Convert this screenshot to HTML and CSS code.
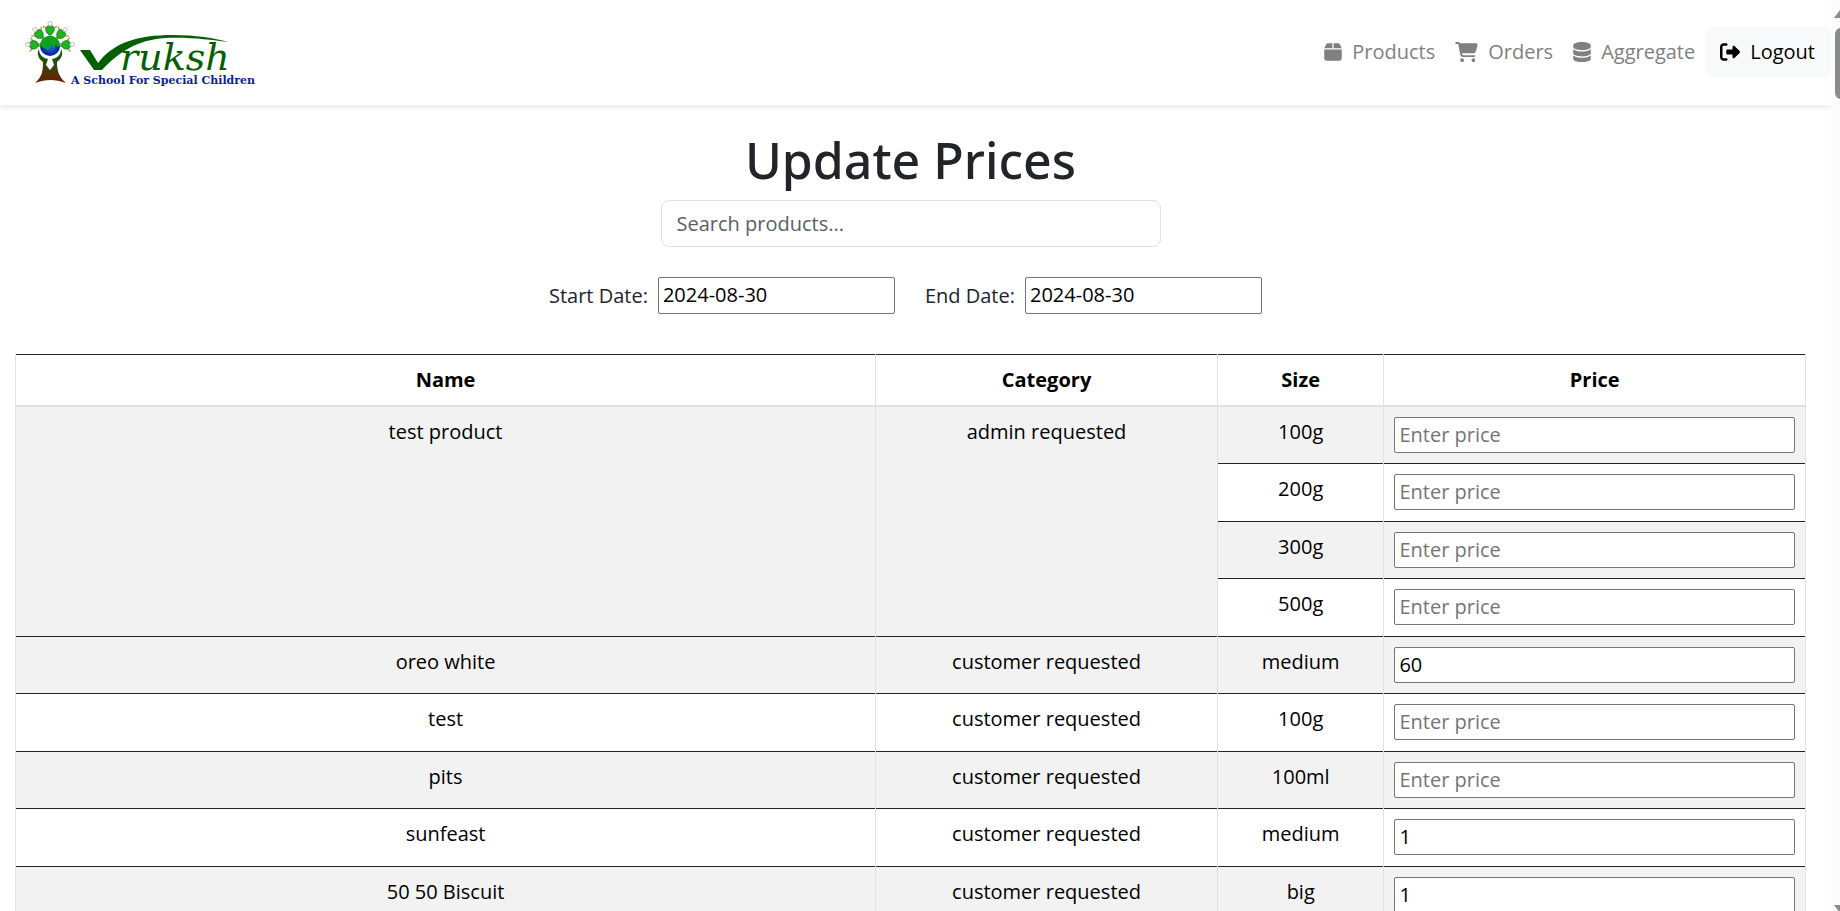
FILE: index.html
```html
<!DOCTYPE html>
<html lang="en">
<head>
<meta charset="utf-8">
<title>Update Prices</title>
<link rel="stylesheet" href="styles.css">
</head>
<body>
<header class="navbar">
  <a class="brand" href="#" aria-label="Vruksh, a school for special children">
    <svg class="logo" viewBox="0 0 236 70" width="236" height="70">
      <defs>
        <linearGradient id="trunk" x1="0" y1="0" x2="0" y2="1"><stop offset="0" stop-color="#0a6412"/><stop offset=".35" stop-color="#26500c"/><stop offset="1" stop-color="#6e1a04"/></linearGradient>
        <radialGradient id="sea"><stop offset="0" stop-color="#1e78e0"/><stop offset="1" stop-color="#0a1a9c"/></radialGradient>
        <g id="leaf">
          <circle cx="0" cy="-22.500" r="2" fill="#fff" stroke="#b9b0b0" stroke-width=".8"/>
          <path d="M-2-16-7-20M2-16 7-20M-1-12-1-8M1-12 1-8" stroke="#c98a3c" stroke-width="1.300" fill="none"/>
          <path d="M0-11C-2-12-5-14-4-18-3-21-1-20 0-19 1-20 3-21 4-18 5-14 2-12 0-11Z" fill="#19b81e" stroke="#0b7a12" stroke-width=".8"/>
        </g>
      </defs>
      <g transform="translate(30 29)">
        <use href="#leaf"/><use href="#leaf" transform="rotate(43)"/><use href="#leaf" transform="rotate(-43)"/><use href="#leaf" transform="rotate(86)"/><use href="#leaf" transform="rotate(-86)"/>
      </g>
      <path d="M19 32C19 37 22 41 28 42L26 48 30 53 34 48 32 42C38 41 41 37 41 32 44 37 41 42 37 45 37 54 39 60 46 66 35 62 26 62 15 66 22 60 23 54 23 45 19 42 16 37 19 32Z" fill="url(#trunk)"/>
      <circle cx="30" cy="29" r="10" fill="url(#sea)"/>
      <path d="M20 29C20 23 25 19 30 19 35 19 40 23 40 29L37 30 36 27 34 32 31 27 28 33 24 31Z" fill="#0aa51b"/>
      <path d="M60 33H70L78 46C93 26 117 18 153 18 176 18 194 21 208 25 190 23 171 20 145 21 117 23 99 35 82 53H74Z" fill="#045f04"/>
      <text class="logo-name" x="100" y="53">ruksh</text>
      <text class="logo-tag" x="51" y="67">A School For Special Children</text>
    </svg>
  </a>
  <nav class="menu">
    <a class="menu-link" href="#"><svg viewBox="0 0 448 512" width="18" height="20"><path d="M50.700 58.500L0 160H208V32H93.700C75.500 32 58.900 42.300 50.700 58.500zM240 160H448L397.300 58.500C389.100 42.300 372.500 32 354.300 32H240V160zM448 192H0V416c0 35.300 28.700 64 64 64H384c35.300 0 64-28.700 64-64V192z"/></svg>Products</a>
    <a class="menu-link" href="#"><svg viewBox="0 0 576 512" width="23" height="20"><path d="M0 24C0 10.700 10.700 0 24 0H69.500c22 0 41.500 12.800 50.600 32h411c26.300 0 45.500 25 38.600 50.400l-41 152.300c-8.500 31.400-37 53.300-69.500 53.300H170.700l5.400 28.500c2.200 11.300 12.100 19.500 23.600 19.500H488c13.300 0 24 10.700 24 24s-10.700 24-24 24H199.700c-34.600 0-64.300-24.600-70.700-58.500L77.400 54.500c-.7-3.800-4-6.500-7.900-6.500H24C10.700 48 0 37.300 0 24zM128 464a48 48 0 1 1 96 0 48 48 0 1 1 -96 0zm336-48a48 48 0 1 1 0 96 48 48 0 1 1 0-96z"/></svg>Orders</a>
    <a class="menu-link" href="#"><svg viewBox="0 0 448 512" width="18" height="20"><path d="M448 80v48c0 44.200-100.300 80-224 80S0 172.200 0 128V80C0 35.800 100.300 0 224 0S448 35.800 448 80zM393.200 214.700c20.800-7.400 39.900-16.900 54.800-28.600V288c0 44.200-100.300 80-224 80S0 332.200 0 288V186.100c14.900 11.800 34 21.200 54.800 28.600C99.700 230.700 159.500 240 224 240s124.300-9.300 169.200-25.300zM0 346.100c14.900 11.800 34 21.200 54.800 28.600C99.700 390.700 159.500 400 224 400s124.300-9.300 169.200-25.300c20.800-7.400 39.900-16.900 54.800-28.600V432c0 44.200-100.300 80-224 80S0 476.200 0 432V346.100z"/></svg>Aggregate</a>
    <button class="logout" type="button"><svg viewBox="0 0 512 512" width="20" height="20"><path d="M377.900 105.900L500.700 228.700c7.200 7.200 11.300 17.100 11.300 27.300s-4.100 20.100-11.300 27.300L377.900 406.100c-6.400 6.400-15 9.900-24 9.900c-18.700 0-33.900-15.200-33.900-33.900l0-62.100-128 0c-17.700 0-32-14.300-32-32l0-64c0-17.700 14.300-32 32-32l128 0 0-62.100c0-18.700 15.200-33.900 33.900-33.900c9 0 17.600 3.600 24 9.900zM160 96L96 96c-17.700 0-32 14.300-32 32l0 256c0 17.700 14.300 32 32 32l64 0c17.700 0 32 14.300 32 32s-14.300 32-32 32l-64 0c-53 0-96-43-96-96L0 128C0 75 43 32 96 32l64 0c17.700 0 32 14.300 32 32s-14.300 32-32 32z"/></svg>Logout</button>
  </nav>
</header>
<main class="content">
  <h1 class="title">Update Prices</h1>
  <input class="search" type="text" placeholder="Search products..." aria-label="Search products">
  <div class="dates">
    <label for="start">Start Date:</label><input class="field date" id="start" type="text" value="2024-08-30">
    <label for="end">End Date:</label><input class="field date" id="end" type="text" value="2024-08-30">
  </div>
  <table class="prices">
    <colgroup><col class="col-name"><col class="col-category"><col class="col-size"><col></colgroup>
    <thead><tr><th>Name</th><th>Category</th><th>Size</th><th>Price</th></tr></thead>
    <tbody>
      <tr><td rowspan="4">test product</td><td rowspan="4">admin requested</td><td>100g</td><td><input class="field" type="text" placeholder="Enter price" aria-label="Price of test product, 100g"></td></tr>
      <tr><td>200g</td><td><input class="field" type="text" placeholder="Enter price" aria-label="Price of test product, 200g"></td></tr>
      <tr><td>300g</td><td><input class="field" type="text" placeholder="Enter price" aria-label="Price of test product, 300g"></td></tr>
      <tr><td>500g</td><td><input class="field" type="text" placeholder="Enter price" aria-label="Price of test product, 500g"></td></tr>
      <tr><td>oreo white</td><td>customer requested</td><td>medium</td><td><input class="field" type="text" value="60" placeholder="Enter price" aria-label="Price of oreo white"></td></tr>
      <tr><td>test</td><td>customer requested</td><td>100g</td><td><input class="field" type="text" placeholder="Enter price" aria-label="Price of test"></td></tr>
      <tr><td>pits</td><td>customer requested</td><td>100ml</td><td><input class="field" type="text" placeholder="Enter price" aria-label="Price of pits"></td></tr>
      <tr><td>sunfeast</td><td>customer requested</td><td>medium</td><td><input class="field" type="text" value="1" placeholder="Enter price" aria-label="Price of sunfeast"></td></tr>
      <tr><td>50 50 Biscuit</td><td>customer requested</td><td>big</td><td><input class="field" type="text" value="1" placeholder="Enter price" aria-label="Price of 50 50 Biscuit"></td></tr>
    </tbody>
  </table>
</main>
<div class="scrollbar" aria-hidden="true">
  <svg width="20" height="20" viewBox="0 0 20 20"><path d="M3 18 9 10Q10 9 11 10L17 18Z"/></svg>
  <div class="thumb"></div>
  <svg class="down" width="20" height="20" viewBox="0 0 20 20"><path d="M3 14 9 22Q10 23 11 22L17 14Z"/></svg>
</div>
</body>
</html>
```

FILE: styles.css
```css
* { box-sizing: border-box; }
html { overflow: hidden; }
body {
  margin: 0;
  height: 100vh;
  padding-right: 9px;
  overflow: hidden;
  background: #fff;
  color: #212529;
  font: 20px/30px "Open Sans", "Noto Sans", sans-serif;
}
input, button { font: inherit; }
.navbar {
  display: flex;
  align-items: center;
  justify-content: space-between;
  height: 105px;
  padding: 0 0 2px 20px;
  box-shadow: 0 3px 5px rgba(0, 0, 0, .08);
}
.brand { display: block; }
.logo { display: block; }
.logo-name { font: italic 38px "DejaVu Serif", serif; fill: #045f04; }
.logo-tag { font: bold 11px "DejaVu Serif", serif; fill: #0a2494; }
.menu { display: flex; align-items: center; }
.menu-link, .logout {
  display: flex;
  align-items: center;
  gap: 10px;
  text-decoration: none;
  color: #808080;
  padding: 10px;
}
.menu svg { fill: currentColor; }
.logout {
  height: 50px;
  padding: 0 16px 0 15px;
  border: 0;
  border-radius: 8px;
  background: #f8f9fa;
  color: #000;
}
.content {
  display: flex;
  flex-direction: column;
  align-items: center;
  padding: 25px 25px 0 15px;
}
.title { margin: 0 0 10px; font: 500 50px/60px "Noto Sans", sans-serif; }
.search {
  width: 500px;
  height: 47px;
  padding: 7px 15px;
  border: 1px solid #dee2e6;
  border-radius: 8px;
  background: #fff;
}
.search::placeholder { color: #595f64; opacity: 1; }
.dates { display: flex; align-items: center; margin: 30px 0 40px; }
.dates label { margin-right: 10px; }
.field {
  display: block;
  width: 100%;
  height: 36px;
  padding: 0 4px 2px;
  border: 1px solid #767676;
  border-radius: 2px;
  background: #fff;
  color: #000;
}
.field::placeholder { color: #757575; opacity: 1; }
.date { width: 237px; height: 37px; margin-right: 30px; }
.date:last-child { margin-right: 10px; }
.prices {
  width: 100%;
  table-layout: fixed;
  border-collapse: collapse;
  color: #000;
  text-align: center;
}
.col-name { width: 48.05%; }
.col-category { width: 19.1%; }
.col-size { width: 9.3%; }
.prices tr { border: solid #212529; border-width: 1px 0; }
.prices th, .prices td { padding: 10px; border: solid #dee2e6; border-width: 0 1px; vertical-align: top; }
.prices th { border-bottom-width: 2px; }
.prices tbody tr { height: 57px; }
.prices tbody tr:nth-child(even) { height: 58px; }
.prices tbody tr:nth-child(odd) td { background: #f2f2f2; }
.scrollbar {
  position: fixed;
  inset: 0 0 0 auto;
  width: 9px;
  display: flex;
  flex-direction: column;
  align-items: flex-start;
  overflow: hidden;
  background: #fcfcfc;
}
.scrollbar svg { flex: none; fill: #8b8b8b; }
.thumb { flex: none; width: 12px; height: 71px; margin: 8px 0 0 4px; border-radius: 6px; background: #8b8b8b; }
.down { margin-top: auto; }
```
